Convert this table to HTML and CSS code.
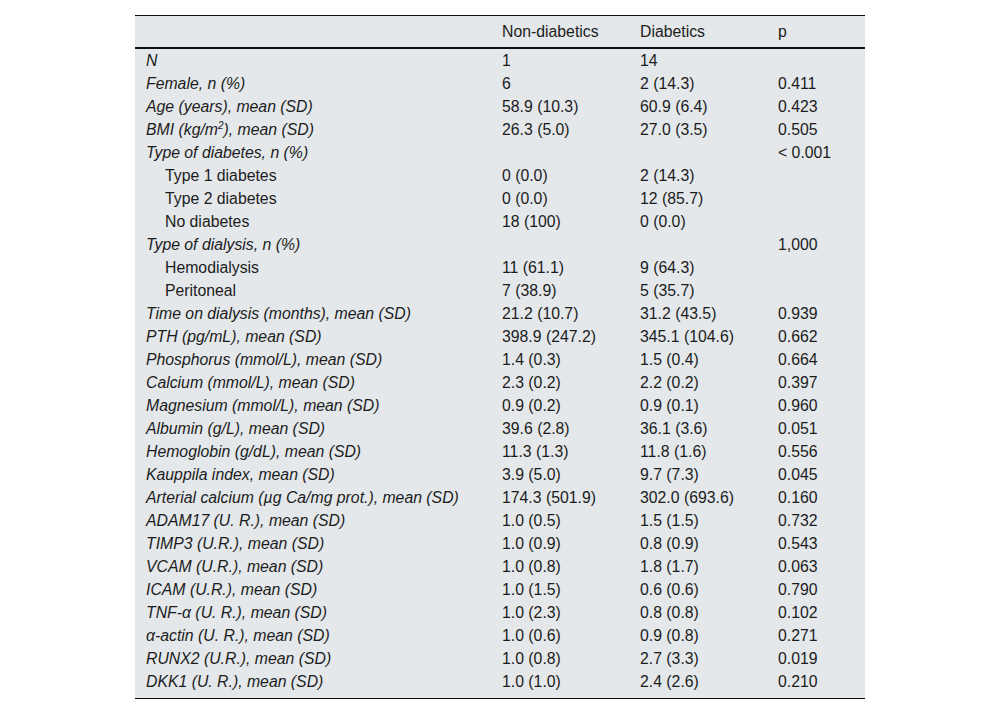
FILE: index.html
```html
<!DOCTYPE html>
<html lang="en">
<head>
<meta charset="utf-8">
<title>Table</title>
<link rel="stylesheet" href="styles.css">
</head>
<body>
<table class="data">
  <colgroup>
    <col class="c-label"><col class="c-num"><col class="c-num"><col class="c-p">
  </colgroup>
  <thead>
    <tr><th></th><th>Non-diabetics</th><th>Diabetics</th><th>p</th></tr>
  </thead>
  <tbody>
    <tr><td class="lbl">N</td><td>1</td><td>14</td><td></td></tr>
    <tr><td class="lbl">Female, n (%)</td><td>6</td><td>2 (14.3)</td><td>0.411</td></tr>
    <tr><td class="lbl">Age (years), mean (SD)</td><td>58.9 (10.3)</td><td>60.9 (6.4)</td><td>0.423</td></tr>
    <tr><td class="lbl">BMI (kg/m<sup>2</sup>), mean (SD)</td><td>26.3 (5.0)</td><td>27.0 (3.5)</td><td>0.505</td></tr>
    <tr><td class="lbl">Type of diabetes, n (%)</td><td></td><td></td><td>&lt; 0.001</td></tr>
    <tr><td class="sub">Type 1 diabetes</td><td>0 (0.0)</td><td>2 (14.3)</td><td></td></tr>
    <tr><td class="sub">Type 2 diabetes</td><td>0 (0.0)</td><td>12 (85.7)</td><td></td></tr>
    <tr><td class="sub">No diabetes</td><td>18 (100)</td><td>0 (0.0)</td><td></td></tr>
    <tr><td class="lbl">Type of dialysis, n (%)</td><td></td><td></td><td>1,000</td></tr>
    <tr><td class="sub">Hemodialysis</td><td>11 (61.1)</td><td>9 (64.3)</td><td></td></tr>
    <tr><td class="sub">Peritoneal</td><td>7 (38.9)</td><td>5 (35.7)</td><td></td></tr>
    <tr><td class="lbl">Time on dialysis (months), mean (SD)</td><td>21.2 (10.7)</td><td>31.2 (43.5)</td><td>0.939</td></tr>
    <tr><td class="lbl">PTH (pg/mL), mean (SD)</td><td>398.9 (247.2)</td><td>345.1 (104.6)</td><td>0.662</td></tr>
    <tr><td class="lbl">Phosphorus (mmol/L), mean (SD)</td><td>1.4 (0.3)</td><td>1.5 (0.4)</td><td>0.664</td></tr>
    <tr><td class="lbl">Calcium (mmol/L), mean (SD)</td><td>2.3 (0.2)</td><td>2.2 (0.2)</td><td>0.397</td></tr>
    <tr><td class="lbl">Magnesium (mmol/L), mean (SD)</td><td>0.9 (0.2)</td><td>0.9 (0.1)</td><td>0.960</td></tr>
    <tr><td class="lbl">Albumin (g/L), mean (SD)</td><td>39.6 (2.8)</td><td>36.1 (3.6)</td><td>0.051</td></tr>
    <tr><td class="lbl">Hemoglobin (g/dL), mean (SD)</td><td>11.3 (1.3)</td><td>11.8 (1.6)</td><td>0.556</td></tr>
    <tr><td class="lbl">Kauppila index, mean (SD)</td><td>3.9 (5.0)</td><td>9.7 (7.3)</td><td>0.045</td></tr>
    <tr><td class="lbl">Arterial calcium (µg Ca/mg prot.), mean (SD)</td><td>174.3 (501.9)</td><td>302.0 (693.6)</td><td>0.160</td></tr>
    <tr><td class="lbl">ADAM17 (U. R.), mean (SD)</td><td>1.0 (0.5)</td><td>1.5 (1.5)</td><td>0.732</td></tr>
    <tr><td class="lbl">TIMP3 (U.R.), mean (SD)</td><td>1.0 (0.9)</td><td>0.8 (0.9)</td><td>0.543</td></tr>
    <tr><td class="lbl">VCAM (U.R.), mean (SD)</td><td>1.0 (0.8)</td><td>1.8 (1.7)</td><td>0.063</td></tr>
    <tr><td class="lbl">ICAM (U.R.), mean (SD)</td><td>1.0 (1.5)</td><td>0.6 (0.6)</td><td>0.790</td></tr>
    <tr><td class="lbl">TNF-α (U. R.), mean (SD)</td><td>1.0 (2.3)</td><td>0.8 (0.8)</td><td>0.102</td></tr>
    <tr><td class="lbl">α-actin (U. R.), mean (SD)</td><td>1.0 (0.6)</td><td>0.9 (0.8)</td><td>0.271</td></tr>
    <tr><td class="lbl">RUNX2 (U.R.), mean (SD)</td><td>1.0 (0.8)</td><td>2.7 (3.3)</td><td>0.019</td></tr>
    <tr class="last"><td class="lbl">DKK1 (U. R.), mean (SD)</td><td>1.0 (1.0)</td><td>2.4 (2.6)</td><td>0.210</td></tr>
  </tbody>
</table>
</body>
</html>
```

FILE: styles.css
```css
html, body {
  margin: 0;
  padding: 0;
  background: #ffffff;
}

body {
  padding-top: 15px;
  font-family: "Liberation Sans", Arial, sans-serif;
  font-size: 15.8px;
  color: #1c1c1c;
}

.data {
  width: 730px;
  margin: 0 auto;
  border-collapse: collapse;
  background: #e4e8eb;
  border-top: 1px solid #111;
  border-bottom: 1px solid #111;
}

.c-label { width: 357px; }
.c-num { width: 138px; }
.c-p { width: 97px; }

.data th {
  font-weight: normal;
  text-align: left;
  height: 31px;
  padding: 0 10px 0 10px;
  border-bottom: 2px solid #111;
  vertical-align: middle;
}

.data td {
  height: 23px;
  padding: 0 10px 0 10px;
  line-height: 23px;
  white-space: nowrap;
  vertical-align: middle;
}

.data td.lbl {
  font-style: italic;
  padding-left: 11px;
}

.data td.sub {
  padding-left: 30px;
}

.data tr.last td {
  padding-bottom: 5px;
}

sup {
  font-size: 10px;
  line-height: 0;
  vertical-align: 6px;
}
```
